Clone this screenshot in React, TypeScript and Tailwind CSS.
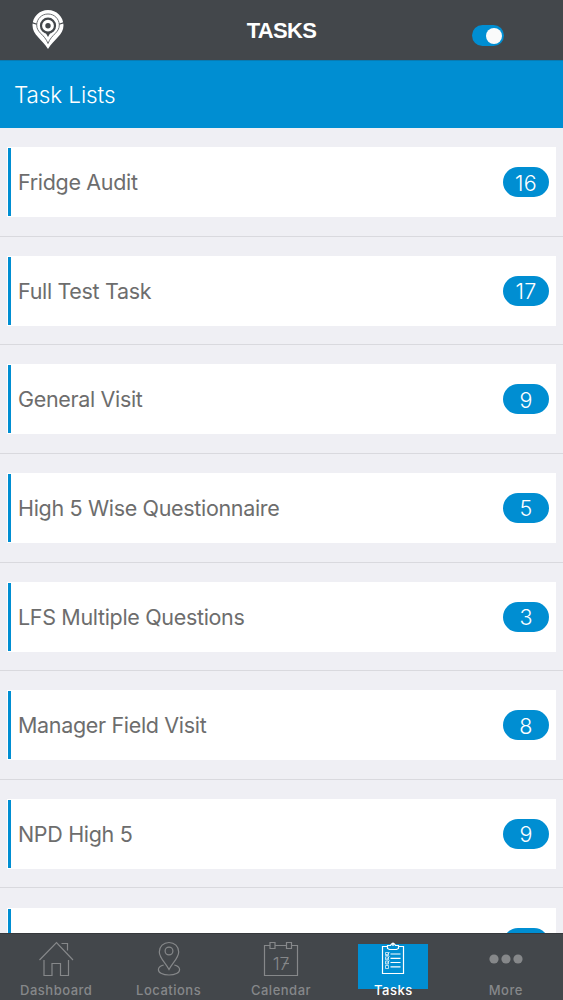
import type { ReactNode } from "react";

const tasks = [
  { name: "Fridge Audit", count: 16 },
  { name: "Full Test Task", count: 17 },
  { name: "General Visit", count: 9 },
  { name: "High 5 Wise Questionnaire", count: 5 },
  { name: "LFS Multiple Questions", count: 3 },
  { name: "Manager Field Visit", count: 8 },
  { name: "NPD High 5", count: 9 },
];

function Logo() {
  return (
    <svg width="34" height="42" viewBox="0 0 34 42" fill="none">
      <path d="M17 1C8.500 1 1.500 7.800 1.500 16.200C1.500 26 11 30 17 40C23 30 32.500 26 32.500 16.200C32.500 7.800 25.500 1 17 1Z" fill="#fff" />
      {/* Inner pin outline */}
      <path d="M17 5C10.600 5 6 9.800 5.700 15.700C5.500 24 13.500 25 17 34.500C20.500 25 28.500 24 28.300 15.700C28 9.800 23.400 5 17 5Z" stroke="#5c6063" strokeWidth="0.9" />
      <path d="M1 13.600L5.800 15.300M33 13.600L28.200 15.300" stroke="#43474b" strokeWidth="1.200" />
      <circle cx="17" cy="16.700" r="7" stroke="#43474b" strokeWidth="2.200" />
      <path d="M14.500 23.500H19.500L17 28Z" fill="#43474b" />
      <circle cx="17" cy="16.700" r="2.700" fill="#43474b" />
    </svg>
  );
}

function HomeIcon() {
  return (
    <svg width="36" height="36" viewBox="0 0 36 36" fill="none" stroke="currentColor" strokeWidth="1.200">
      <path d="M1.500 19L18.500 1.500L35 19M6 19V34.500H14V22.500H22.500V34.500H30.500V19M23.500 2.500H29.500V9.500" />
    </svg>
  );
}

function PinIcon() {
  return (
    <svg width="36" height="36" viewBox="0 0 36 36" fill="none" stroke="currentColor" strokeWidth="1.200">
      <path d="M18 28.500C14.500 21.500 8.300 17 8.300 10.900C8.300 5.500 12.500 1.500 18 1.500S27.700 5.500 27.700 10.900C27.700 17 21.500 21.500 18 28.500Z" />
      <circle cx="18" cy="10" r="3.900" />
      <path d="M12.700 24C9.500 24.800 7.400 26.500 7.400 28.700C7.400 31.800 12 34 18 34S28.600 31.800 28.600 28.700C28.600 26.500 26.500 24.800 23.300 24" />
    </svg>
  );
}

function CalendarIcon() {
  return (
    <div className="relative h-9 w-9">
      <svg width="36" height="36" viewBox="0 0 36 36" fill="none" stroke="currentColor" strokeWidth="1.200">
        <path d="M7 4.500H1.500V34.500H34.500V4.500H28.500M12 4.500H23.500M7 1.500H12V7.500H7ZM23.500 1.500H28.500V7.500H23.500Z" />
        <path d="M20.500 22.500H26" />
      </svg>
      <span className="absolute left-0 top-[12.500px] w-9 text-center text-[17.500px] font-light leading-[20px]">17</span>
    </div>
  );
}

function TasksIcon() {
  return (
    <svg width="36" height="36" viewBox="0 0 36 36" fill="none" stroke="currentColor" strokeWidth="1.200">
      <path d="M12.500 5.500H7.500V32.500H28.500V5.500H23.500" />
      <path d="M12.500 4.500H15.500C16 1.800 20 1.800 20.500 4.500H23.500V7.500L21.500 8.500H14.500L12.500 7.500Z" />
      <circle cx="18" cy="3.200" r="1" />
      <path d="M15.500 13H25.500M15.500 17.300H25.500M15.500 21.500H25.500M15.500 25.800H25.500" />
      <path d="M10.500 11.500H13.500V14.500H10.500ZM10.500 15.800H13.500V18.800H10.500ZM10.500 20.100H13.500V23.100H10.500ZM10.500 24.500H13.500V27.500H10.500ZM11 13L12 14L14.500 11M11 17.300L12 18.300L14.500 15.300M11 21.500L12 22.500L14.500 19.500" strokeWidth="0.7" />
    </svg>
  );
}

function MoreIcon() {
  return (
    <svg width="36" height="36" viewBox="0 0 36 36" fill="currentColor">
      <circle cx="6" cy="18" r="4.600" />
      <circle cx="18" cy="18" r="4.600" />
      <circle cx="30" cy="18" r="4.600" />
    </svg>
  );
}

function Tab({ label, icon, active }: { label: string; icon: ReactNode; active?: boolean }) {
  return (
    <div className={`flex flex-1 flex-col items-center ${active ? "text-white" : "text-[#86888a]"}`}>
      <div className={`mt-[10px] flex h-[44.500px] w-[70px] justify-center ${active ? "bg-[#008ed2]" : ""}`}>
        <div className="-mt-[3px]">{icon}</div>
      </div>
      <span className="-mt-[6.500px] text-[13px] font-medium leading-4 tracking-[0.5px]">{label}</span>
    </div>
  );
}

function Badge({ children }: { children?: ReactNode }) {
  return (
    <span className="flex h-[30px] w-[46px] items-center justify-center rounded-full bg-[#008ed2] pt-px text-[21.500px] font-light tracking-[0.2px] text-white">
      {children}
    </span>
  );
}

function Row({ name, count }: { name?: string; count?: number }) {
  return (
    <div className="h-[108.650px] border-b border-[#d9d9de] px-[7px] pt-[19.200px]">
      <div className="flex h-[70px] items-center bg-white pr-[7px]">
        <div className="ml-px h-[68px] w-[3px] bg-[#008ed2]" />
        <span className="flex-1 pl-[7px] pt-[0.300px] text-[21.500px] tracking-[-0.33px] text-[#6d6d6d]">{name}</span>
        <Badge>{count}</Badge>
      </div>
    </div>
  );
}

export default function App() {
  return (
    <div className="flex h-[1000px] w-[563px] flex-col overflow-hidden bg-[#efeff4] font-['Inter',sans-serif]">
      {/* Header */}
      <header className="grid h-[60px] shrink-0 grid-cols-3 bg-[#43474b]">
        <div className="pl-[30.500px] pt-[9px]">
          <Logo />
        </div>
        <h1 className="pt-[18px] text-center font-['Liberation_Sans',sans-serif] text-[22px] font-bold leading-[26px] tracking-[-0.7px] text-white">TASKS</h1>
        <div className="flex justify-end pr-[59px] pt-[25px]">
          <div className="flex h-[21px] w-8 items-center justify-end rounded-full bg-[#008ed2] pr-[2px]">
            <div className="h-4 w-4 rounded-full bg-[#fafafa]" />
          </div>
        </div>
      </header>

      <div className="flex h-[68px] shrink-0 items-center border-t border-[#087bb3] bg-[#008ed2] pl-[14px] pt-px">
        <h2 className="text-[22.500px] font-light tracking-[-0.1px] text-white">Task Lists</h2>
      </div>

      {/* Task list */}
      <main className="min-h-0 flex-1 overflow-hidden">
        {tasks.map((task) => (
          <Row key={task.name} name={task.name} count={task.count} />
        ))}
        <Row />
      </main>

      {/* Tab bar */}
      <nav className="flex h-[67px] shrink-0 border-t border-[#36393c] bg-[#43474b] pr-px">
        <Tab label="Dashboard" icon={<HomeIcon />} />
        <Tab label="Locations" icon={<PinIcon />} />
        <Tab label="Calendar" icon={<CalendarIcon />} />
        <Tab label="Tasks" icon={<TasksIcon />} active />
        <Tab label="More" icon={<MoreIcon />} />
      </nav>
    </div>
  );
}
